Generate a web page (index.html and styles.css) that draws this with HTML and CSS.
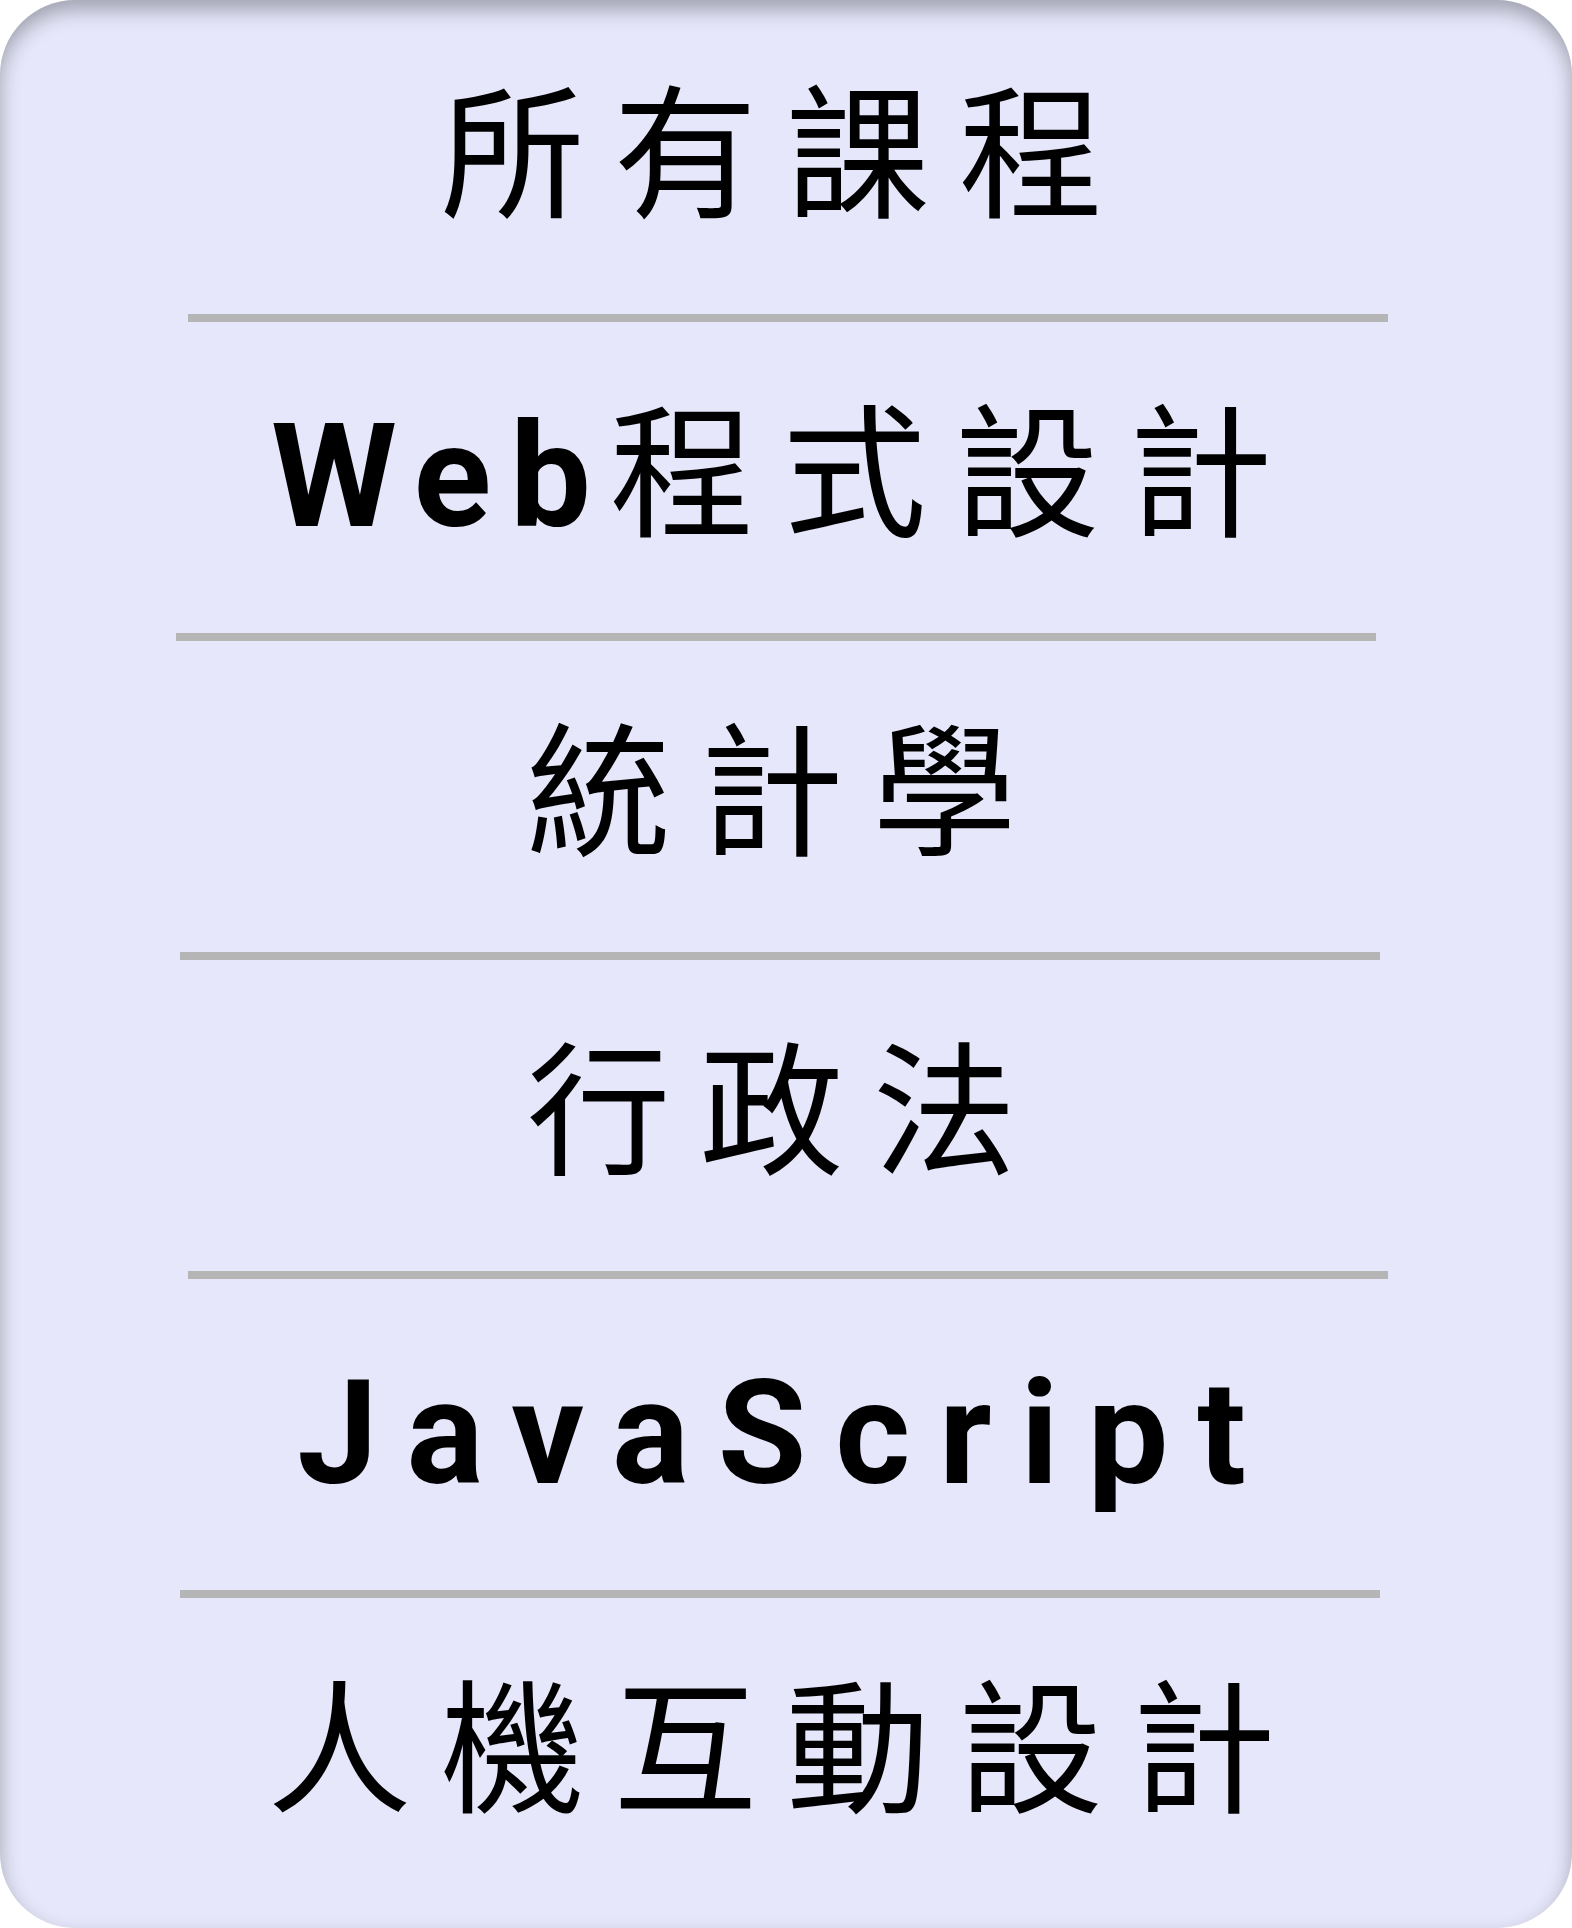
FILE: index.html
```html
<!DOCTYPE html>
<html lang="zh-Hant">
<head>
<meta charset="utf-8">
<title>所有課程</title>
<link rel="stylesheet" href="styles.css">
</head>
<body>
<nav class="panel">
  <div class="course">所有課程</div>
  <hr class="divider divider--a">
  <div class="course"><span class="latin latin--tight">Web</span>程式設計</div>
  <hr class="divider divider--b">
  <div class="course">統計學</div>
  <hr class="divider divider--c">
  <div class="course">行政法</div>
  <hr class="divider divider--a">
  <div class="course"><span class="latin">JavaScript</span></div>
  <hr class="divider divider--c">
  <div class="course">人機互動設計</div>
</nav>
</body>
</html>
```

FILE: styles.css
```css
html, body {
  margin: 0;
  padding: 0;
  background: #ffffff;
}

.panel {
  box-sizing: border-box;
  width: 1572px;
  min-height: 1928px;
  padding: 44px 0 89px;
  background: #e6e7fa;
  border-radius: 75px;
  box-shadow: inset 0 10px 20px rgba(0, 0, 0, 0.3);
  font-family: "Noto Sans CJK TC", "Noto Sans CJK SC", sans-serif;
  color: #000;
}

.course {
  height: 200px;
  font-size: 144px;
  line-height: 200px;
  letter-spacing: 0.2em;
  text-align: center;
  white-space: nowrap;
}

.latin {
  font-family: Roboto, "Liberation Sans", sans-serif;
  font-weight: 700;
}

.latin--tight {
  letter-spacing: 0.13em;
}

.divider {
  width: 1200px;
  height: 8px;
  border: 0;
  margin: 70px 0 41px;
  background: #b5b5b5;
}

.divider--a { margin-left: 188px; }
.divider--b { margin-left: 176px; }
.divider--c { margin-left: 180px; }
```
